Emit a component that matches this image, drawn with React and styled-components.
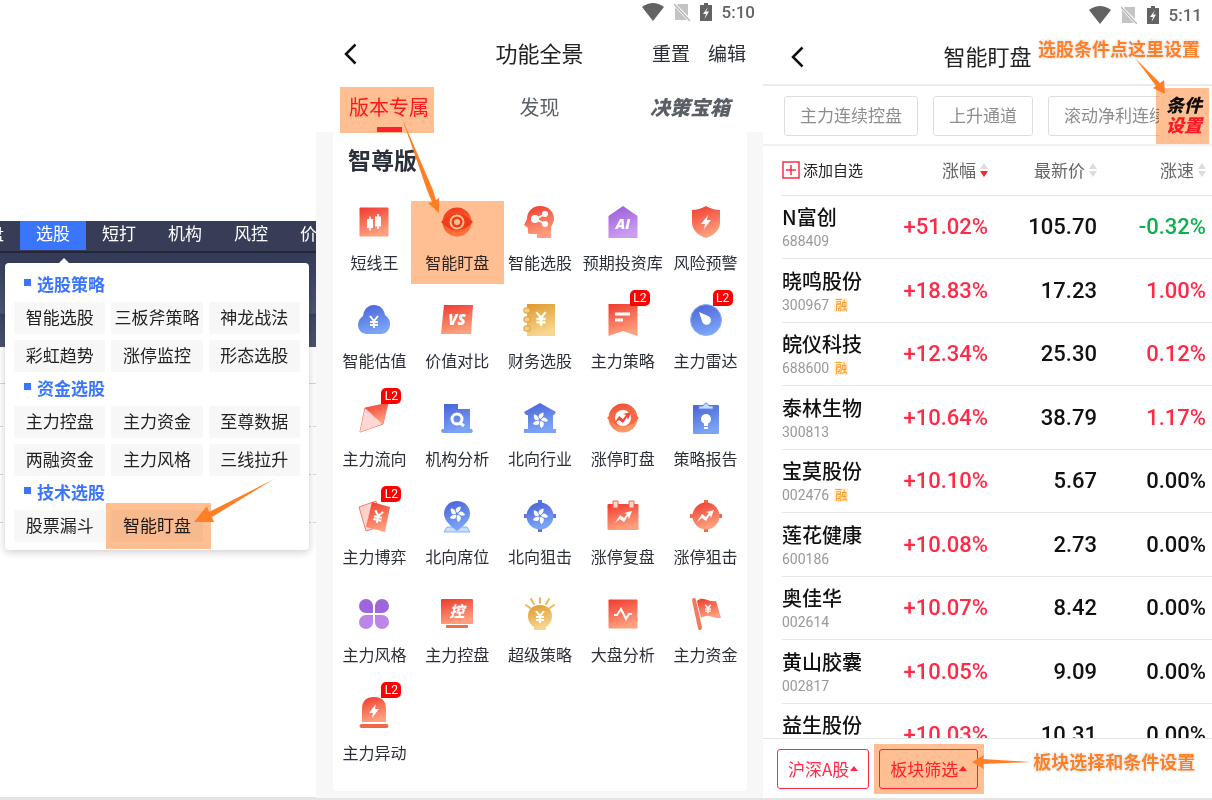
import React, { useState } from 'react'
import styled, { createGlobalStyle, css } from 'styled-components'

const strategyGroups = [
  {
    title: '选股策略',
    items: ['智能选股', '三板斧策略', '神龙战法', '彩虹趋势', '涨停监控', '形态选股'],
  },
  {
    title: '资金选股',
    items: ['主力控盘', '主力资金', '至尊数据', '两融资金', '主力风格', '三线拉升'],
  },
  { title: '技术选股', items: ['股票漏斗', '智能盯盘'] },
]

const features = [
  { name: '短线王', icon: 'candles' },
  { name: '智能盯盘', icon: 'eye', marked: true },
  { name: '智能选股', icon: 'head' },
  { name: '预期投资库', icon: 'ai' },
  { name: '风险预警', icon: 'shield' },
  { name: '智能估值', icon: 'cloud' },
  { name: '价值对比', icon: 'versus' },
  { name: '财务选股', icon: 'notebook' },
  { name: '主力策略', icon: 'ribbon', level2: true },
  { name: '主力雷达', icon: 'radar', level2: true },
  { name: '主力流向', icon: 'kite', level2: true },
  { name: '机构分析', icon: 'building' },
  { name: '北向行业', icon: 'flowerHouse' },
  { name: '涨停盯盘', icon: 'trendEye' },
  { name: '策略报告', icon: 'clipboard' },
  { name: '主力博弈', icon: 'cards', level2: true },
  { name: '北向席位', icon: 'flowerPin' },
  { name: '北向狙击', icon: 'flowerTarget' },
  { name: '涨停复盘', icon: 'calendar' },
  { name: '涨停狙击', icon: 'trendTarget' },
  { name: '主力风格', icon: 'petals' },
  { name: '主力控盘', icon: 'monitor' },
  { name: '超级策略', icon: 'bulb' },
  { name: '大盘分析', icon: 'pulse' },
  { name: '主力资金', icon: 'flag' },
  { name: '主力异动', icon: 'siren', level2: true },
]

const stocks = [
  { name: 'N富创', code: '688409', change: '+51.02%', price: '105.70', speed: '-0.32%' },
  { name: '晓鸣股份', code: '300967', margin: true, change: '+18.83%', price: '17.23', speed: '1.00%' },
  { name: '皖仪科技', code: '688600', margin: true, change: '+12.34%', price: '25.30', speed: '0.12%' },
  { name: '泰林生物', code: '300813', change: '+10.64%', price: '38.79', speed: '1.17%' },
  { name: '宝莫股份', code: '002476', margin: true, change: '+10.10%', price: '5.67', speed: '0.00%' },
  { name: '莲花健康', code: '600186', change: '+10.08%', price: '2.73', speed: '0.00%' },
  { name: '奥佳华', code: '002614', change: '+10.07%', price: '8.42', speed: '0.00%' },
  { name: '黄山胶囊', code: '002817', change: '+10.05%', price: '9.09', speed: '0.00%' },
  { name: '益生股份', code: '002458', change: '+10.03%', price: '10.31', speed: '0.00%' },
]

const speedTone = (speed) => {
  const value = parseFloat(speed)
  if (value > 0) return 'up'
  return value < 0 ? 'down' : 'flat'
}

/* ---------- feature icons ---------- */

function Gradients() {
  const stops = {
    red: ['#ef3a2e', '#ff9f7d'],
    blue: ['#4960d6', '#7aa5f7'],
    purple: ['#965ad6', '#cb9df1'],
    gold: ['#e0982a', '#f7d68f'],
    orange: ['#f0452f', '#ff9a66'],
  }
  return (
    <HiddenSvg aria-hidden="true">
      <defs>
        {Object.entries(stops).map(([id, [from, to]]) => (
          <linearGradient key={id} id={id} x1="0" y1="0" x2="0.3" y2="1">
            <stop offset="0" stopColor={from} />
            <stop offset="1" stopColor={to} />
          </linearGradient>
        ))}
      </defs>
    </HiddenSvg>
  )
}

function IconText({ x, y, size, children }) {
  return (
    <GlyphText x={x} y={y} fontSize={size} textAnchor="middle" fill="#fff">
      {children}
    </GlyphText>
  )
}

const Yen = ({ x = 17, y = 17, s = 1 }) => (
  <path
    d="M-4 -6 L0 -1 L4 -6 M0 -1 V6 M-4 0 H4 M-4 3 H4"
    transform={`translate(${x} ${y}) scale(${s})`}
    fill="none"
    stroke="#fff"
    strokeWidth="2"
  />
)

const Flower = ({ x = 17, y = 17 }) => (
  <g transform={`translate(${x} ${y})`} fill="#fff">
    {[0, 72, 144, 216, 288].map((a) => (
      <path key={a} d="M0 -1 C-3 -3 -3 -6 2 -8 C3 -6 3 -4 0 -1Z" transform={`rotate(${a + 10})`} />
    ))}
  </g>
)

const Trend = ({ x = 17, y = 17, fill = '#fff' }) => (
  <path
    d="M-8 6 L-3 -2 L1 1 L4 -3 L1 -4 L9 -6 L6 2 L5 -1 L1 5 L-3 2Z"
    transform={`translate(${x} ${y})`}
    fill={fill}
  />
)

const Bolt = ({ x = 17, y = 17 }) => (
  <path d="M2 -7 L-5 2 H-1 L-2 7 L5 -2 H1Z" transform={`translate(${x} ${y})`} fill="#fff" />
)

const glyphs = {
  candles: (
    <>
      <rect x="2.5" y="2.5" width="29" height="29" rx="1" fill="url(#red)" />
      <path d="M10 14h6v9h-6zM12.2 11.5h1.6v14h-1.6zM18 11.5h6v10h-6zM20.2 9h1.6v15h-1.6z" fill="#fff" />
    </>
  ),
  eye: (
    <>
      <circle cx="17" cy="17" r="14.5" fill="url(#orange)" />
      <path d="M1 17 Q17 0 33 17 Q17 34 1 17Z" fill="#ee5129" />
      <path d="M3 20 Q17 36 31 20 Q17 32 3 20Z" fill="#ff8a55" />
      <circle cx="17" cy="17" r="6.5" fill="none" stroke="#fff" strokeWidth="2" />
      <circle cx="17" cy="17" r="3" fill="#fff" />
    </>
  ),
  head: (
    <>
      <path d="M17 1 C26 1 31 7 31 14 C31 18 28 20 28 24 V33 H14 V29 H7 C4 29 5 26 5 23 L1 20 L4 14 C4 7 9 1 17 1Z" fill="url(#red)" />
      <path d="M22 9 L13 14 L22 19" fill="none" stroke="#fff" strokeWidth="2" />
      <circle cx="12" cy="14" r="4" fill="#fff" />
      <circle cx="22" cy="9" r="3" fill="#fff" />
      <circle cx="22" cy="19" r="3" fill="#fff" />
    </>
  ),
  ai: (
    <>
      <path d="M17 1 L31.5 11 V33 H2.5 V11Z" fill="url(#purple)" />
      <IconText x="17" y="24" size={14}>AI</IconText>
    </>
  ),
  shield: (
    <>
      <path d="M17 1 Q24 5 31 5 V17 Q31 28 17 33 Q3 28 3 17 V5 Q10 5 17 1Z" fill="url(#red)" />
      <Bolt />
    </>
  ),
  cloud: (
    <>
      <path d="M17 2 C23 2 27 6 28 12 C32 15 33 18 33 21 C33 27 29 31 24 31 H10 C5 31 1 27 1 22 C1 18 3 15 6 13 C7 6 11 2 17 2Z" fill="url(#blue)" />
      <Yen y={19} />
    </>
  ),
  versus: (
    <>
      <path d="M4 2 H33 L31 31 H1Z" fill="url(#red)" />
      <IconText x="17" y="22" size={15}>VS</IconText>
    </>
  ),
  notebook: (
    <>
      <rect x="4" y="1" width="28" height="32" fill="url(#gold)" />
      {[5, 14, 23].map((y) => (
        <rect key={y} x="1" y={y} width="6" height="5" rx="1" fill="#f3cf8a" stroke="#dd9b38" strokeWidth="1" />
      ))}
      <Yen x={18} y={16} s={1.15} />
    </>
  ),
  ribbon: (
    <>
      <path d="M2.5 1 H31.5 V33 L17 28 L2.5 33Z" fill="url(#red)" />
      <path d="M9 11 H24 M9 17 H17" stroke="#fff" strokeWidth="3" />
    </>
  ),
  radar: (
    <>
      <circle cx="17" cy="17" r="15.5" fill="url(#blue)" stroke="#8fb1f6" />
      <path d="M10 9 L19 13 A4.5 4.5 0 1 1 13 18Z" fill="#fff" />
    </>
  ),
  kite: (
    <>
      <path d="M8 7 L31 2 L26 23 L3 31Z" fill="#ffb6a2" stroke="#f37763" strokeWidth="1" />
      <path d="M8 7 L31 2 L26 23Z" fill="url(#red)" />
      <path d="M8 8 L25 23 L3 31Z" fill="#ffd8d5" />
    </>
  ),
  building: (
    <>
      <path d="M4 3 H18 V8 H30 V28 H32 Q34 31 31 32 H3 Q0 31 2 28 H4Z" fill="url(#blue)" />
      <circle cx="17" cy="18" r="5" fill="none" stroke="#fff" strokeWidth="3" />
      <path d="M20 22 L24 25" stroke="#fff" strokeWidth="3" />
    </>
  ),
  flowerHouse: (
    <>
      <path d="M17 2 L33 11 L31 14 H30 V28 H33 V32 H1 V28 H5 V14 H3 L1 11Z" fill="url(#blue)" />
      <Flower y={19} />
    </>
  ),
  trendEye: (
    <>
      <circle cx="17" cy="17" r="14.5" fill="url(#orange)" />
      <path d="M1 17 Q17 0 33 17 Q17 34 1 17Z" fill="#fa6844" />
      <circle cx="17" cy="17" r="8" fill="#fff" />
      <Trend x={16} fill="#ef4b38" />
    </>
  ),
  clipboard: (
    <>
      <rect x="4" y="4" width="26" height="29" rx="1" fill="url(#blue)" />
      <path d="M10 8 V5 H14 Q17 -1 20 5 H24 V8Z" fill="#c7dbff" stroke="#6d90e8" />
      <circle cx="17" cy="18" r="5" fill="#fff" />
      <path d="M15 22 h4 v3 h-4z M15 26 h4 v2 h-4z" fill="#fff" />
    </>
  ),
  cards: (
    <>
      <path d="M2 8 L19 2 L25 27 L9 32Z" fill="#ffd2cc" stroke="#f27d6d" />
      <path d="M15 3 L33 8 L28 33 L9 28Z" fill="url(#red)" />
      <g transform="rotate(12 21 18)"><Yen x={21} y={18} /></g>
    </>
  ),
  flowerPin: (
    <>
      <path d="M7 28 H27 L30 33 H4Z" fill="#c9ddff" stroke="#8baef5" />
      <path d="M17 2 C25 2 30 8 30 15 C30 22 21 29 17 32 C13 29 4 22 4 15 C4 8 9 2 17 2Z" fill="url(#blue)" />
      <Flower y={15} />
    </>
  ),
  flowerTarget: (
    <>
      <path d="M15 1 h4 v32 h-4z M1 15 h32 v4 h-32z" fill="#5776de" />
      <circle cx="17" cy="17" r="13.5" fill="url(#blue)" />
      <Flower />
    </>
  ),
  calendar: (
    <>
      <rect x="1.5" y="5" width="31" height="26" rx="1" fill="url(#red)" />
      <path d="M7 2 h5 v7 h-5z M23 2 h5 v7 h-5z" fill="#ffd5cf" stroke="#f4614d" />
      <Trend y={18} />
    </>
  ),
  trendTarget: (
    <>
      <path d="M15 1 h4 v32 h-4z M1 15 h32 v4 h-32z" fill="#f4694f" />
      <circle cx="17" cy="17" r="13.5" fill="url(#red)" />
      <Trend x={16} />
    </>
  ),
  petals: (
    <>
      <path d="M16 16 H9 A7 7 0 1 1 16 9Z M18 16 V9 A7 7 0 1 1 25 16Z" fill="#9d66db" />
      <path d="M16 18 V25 A7 7 0 1 1 9 18Z M18 18 H25 A7 7 0 1 1 18 25Z" fill="#bd85e8" />
    </>
  ),
  monitor: (
    <>
      <rect x="1" y="2" width="32" height="25" rx="1" fill="url(#red)" />
      <rect x="6" y="28" width="22" height="3" rx="1" fill="#f36a50" />
      <IconText x="17" y="20" size={15}>控</IconText>
    </>
  ),
  bulb: (
    <>
      <path d="M17 1 V6 M8 2 L11 7 M26 2 L23 7 M3 8 L7 11 M31 8 L27 11" stroke="#eab85a" strokeWidth="2" strokeLinecap="round" />
      <path d="M17 8 C25 8 29 13 29 19 C29 25 26 28 23 30 V33 H11 V30 C8 28 5 25 5 19 C5 13 9 8 17 8Z" fill="url(#gold)" />
      <Yen y={20} />
    </>
  ),
  pulse: (
    <>
      <rect x="2.5" y="2.5" width="29" height="29" rx="1" fill="url(#red)" />
      <path d="M8 18 H11 L15 12 L20 22 L23 17 H26" fill="none" stroke="#fff" strokeWidth="2" />
    </>
  ),
  flag: (
    <>
      <path d="M5 3 L11 31" stroke="#f4795d" strokeWidth="4" strokeLinecap="round" />
      <path d="M8 4 C14 -2 20 6 27 4 L32 21 C24 22 20 16 12 21Z" fill="url(#red)" />
      <Yen x={19} y={12} s={0.7} />
    </>
  ),
  siren: (
    <>
      <path d="M5 27 V14 Q5 2 17 2 Q29 2 29 14 V27Z" fill="url(#red)" />
      <rect x="2.5" y="29" width="29" height="4" rx="2" fill="#f26749" />
      <Bolt y={16} />
    </>
  ),
}

function FeatureIcon({ name }) {
  return (
    <svg width="34" height="34" viewBox="0 0 34 34" aria-hidden="true">
      {glyphs[name]}
    </svg>
  )
}

/* ---------- shared pieces ---------- */

function Arrow({ points }) {
  return (
    <ArrowSvg width="1" height="1" aria-hidden="true">
      <polygon points={points} fill="#ff7f27" />
    </ArrowSvg>
  )
}

function Status({ time, low }) {
  return (
    <StatusBar $low={low}>
      <svg width="22" height="18" viewBox="0 0 22 18" aria-hidden="true">
        <path d="M0 4 Q11 -4 22 4 L11 18Z" fill="#636363" />
      </svg>
      <svg width="16" height="18" viewBox="0 0 16 18" aria-hidden="true">
        <path d="M4 1 H14 V13 L3 2Z M1 4 L13 17 H1Z" fill="#c4c4c4" />
        <path d="M0 1 L16 18" stroke="#b5b5b5" strokeWidth="1.5" />
      </svg>
      <svg width="12" height="18" viewBox="0 0 12 18" aria-hidden="true">
        <path d="M4 0 H8 V2 H12 V18 H0 V2 H4Z" fill="#636363" />
        <path d="M8 4 L3 11 H6 L4.5 16 L9 8.5 H6Z" fill="#fff" />
      </svg>
      <span>{time}</span>
    </StatusBar>
  )
}

function Back() {
  return (
    <BackButton type="button" aria-label="返回">
      <svg width="13" height="22" viewBox="0 0 13 22" aria-hidden="true">
        <path d="M11.5 1.5 L2 11 L11.5 20.5" fill="none" stroke="#111" strokeWidth="2.5" />
      </svg>
    </BackButton>
  )
}

function SortMark({ active }) {
  return (
    <svg width="8" height="14" viewBox="0 0 8 14" aria-hidden="true">
      <path d="M0 6 L4 0 L8 6Z" fill="#dcdcdc" />
      <path d="M0 8 L4 14 L8 8Z" fill={active ? '#ff2338' : '#dcdcdc'} />
    </svg>
  )
}

/* ---------- panels ---------- */

function StrategyMenu() {
  return (
    <Desktop>
      <NavBar>
        <NavItem href="#">复盘</NavItem>
        <NavItem href="#" $active>选股</NavItem>
        <NavItem href="#">短打</NavItem>
        <NavItem href="#">机构</NavItem>
        <NavItem href="#">风控</NavItem>
        <NavItem href="#">价值</NavItem>
      </NavBar>
      <Banner />
      <Sheet>
        <i />
        <i />
        <i />
        <i />
      </Sheet>
      <Popup>
        {strategyGroups.map((group) => (
          <section key={group.title}>
            <GroupTitle>{group.title}</GroupTitle>
            <GroupGrid>
              {group.items.map((item) => (
                <GroupButton type="button" key={item}>
                  {item}
                  {item === '智能盯盘' && (
                    <Mark $inset="-7px -8px -7px -5px">
                      <Arrow points="88,19 101,3 103,9 168,-24 106,14 108,19" />
                    </Mark>
                  )}
                </GroupButton>
              ))}
            </GroupGrid>
          </section>
        ))}
      </Popup>
    </Desktop>
  )
}

function Panorama() {
  return (
    <Middle>
      <Status time="5:10" />
      <TitleBar>
        <Back />
        <h1>功能全景</h1>
        <Actions>
          <button type="button">重置</button>
          <button type="button">编辑</button>
        </Actions>
      </TitleBar>
      <Tabs>
        <Tab type="button" $active>
          版本专属
          <Mark $inset="3px 28px -1px 24px" />
        </Tab>
        <Tab type="button">发现</Tab>
        <Tab type="button" $heavy>决策宝箱</Tab>
      </Tabs>
      <Backdrop>
        <FeaturePanel>
          <h2>智尊版</h2>
          <FeatureGrid>
            {features.map((feature) => (
              <Feature type="button" key={feature.name}>
                <IconBox>
                  <FeatureIcon name={feature.icon} />
                  {feature.level2 && <Level2>L2</Level2>}
                </IconBox>
                <span>{feature.name}</span>
                {feature.marked && (
                  <Mark $inset="5px -5px 10px -5px">
                    <Arrow points="-9,-83 22,-11 25,-1 28,-3 28,12 17,2 21,1 16,-11" />
                  </Mark>
                )}
              </Feature>
            ))}
          </FeatureGrid>
        </FeaturePanel>
      </Backdrop>
    </Middle>
  )
}

function Watch() {
  const [sortKey, setSortKey] = useState('change')
  return (
    <Right>
      <Status time="5:11" low />
      <TitleBar $line>
        <Back />
        <h1>智能盯盘</h1>
        <TopNote>选股条件点这里设置</TopNote>
      </TitleBar>
      <ConditionBar>
        <Chips>
          <Chip type="button">主力连续控盘</Chip>
          <Chip type="button">上升通道</Chip>
          <Chip type="button">滚动净利连续增长</Chip>
        </Chips>
        <SettingButton type="button">
          <span>条件</span>
          <em>设置</em>
          <Mark $inset="2px 0 0 -3px">
            <Arrow points="-21,-30 4,-5 8,-8 9,6 -3,0 0,-2" />
          </Mark>
        </SettingButton>
      </ConditionBar>
      <ListArea>
        <Table>
          <colgroup>
            <col />
            <col width="110" />
            <col width="109" />
            <col width="115" />
          </colgroup>
          <thead>
            <tr>
              <th>
                <AddButton type="button">
                  <svg width="18" height="18" viewBox="0 0 18 18" aria-hidden="true">
                    <path d="M1 1 H17 V17 H1Z M4 9 H14 M9 4 V14" fill="none" stroke="#ff2a45" strokeWidth="1.5" />
                  </svg>
                  添加自选
                </AddButton>
              </th>
              {[['change', '涨幅'], ['price', '最新价'], ['speed', '涨速']].map(([key, label]) => (
                <th key={key}>
                  <SortButton type="button" onClick={() => setSortKey(key)}>
                    {label}
                    <SortMark active={sortKey === key} />
                  </SortButton>
                </th>
              ))}
            </tr>
          </thead>
          <tbody>
            {stocks.map((stock) => (
              <tr key={stock.code}>
                <td>
                  <StockName>{stock.name}</StockName>
                  <StockCode>
                    {stock.code}
                    {stock.margin && <b>融</b>}
                  </StockCode>
                </td>
                <Figure $tone="up">{stock.change}</Figure>
                <Figure>{stock.price}</Figure>
                <Figure $tone={speedTone(stock.speed)}>{stock.speed}</Figure>
              </tr>
            ))}
          </tbody>
        </Table>
      </ListArea>
      <BottomBar>
        <FilterButton type="button">
          沪深A股<Caret />
        </FilterButton>
        <FilterButton type="button">
          板块筛选<Caret />
          <Mark $inset="-6px -7px -6px -6px">
            <Arrow points="98,18 110,11 109,15 157,18 109,20 110,25" />
          </Mark>
        </FilterButton>
        <Note>板块选择和条件设置</Note>
      </BottomBar>
    </Right>
  )
}

export default function App() {
  return (
    <>
      <GlobalStyle />
      <Gradients />
      <Page>
        <StrategyMenu />
        <Panorama />
        <Watch />
      </Page>
    </>
  )
}

const GlobalStyle = createGlobalStyle`
  *{
    box-sizing:border-box;
  }
  body{
    margin:0;
    background:#fff;
    color:#2b2f38;
    font-family:"Noto Sans CJK SC","Noto Sans",sans-serif;
  }
  h1,h2{
    margin:0;
  }
  button{
    border:0;
    padding:0;
    background:none;
    color:inherit;
    font:inherit;
    cursor:pointer;
  }
`
const HiddenSvg = styled.svg`
  position:absolute;
  width:0;
  height:0;
`
const GlyphText = styled.text`
  font-family:"Open Sans","Noto Sans CJK SC",sans-serif;
  font-weight:800;
  font-style:italic;
`
const Page = styled.div`
  display:grid;
  grid-template-columns:316fr 447fr 449fr;
  grid-template-rows:minmax(0,1fr);
  height:100vh;
  overflow:hidden;
  background:#fff;
  border-bottom:2px solid #e4e4e4;
`
const Mark = styled.span`
  position:absolute;
  inset:${props => props.$inset};
  pointer-events:none;
  &::before{
    content:'';
    position:absolute;
    inset:0;
    background:#ffbf93;
    mix-blend-mode:multiply;
  }
`
const ArrowSvg = styled.svg`
  position:absolute;
  top:0;
  left:0;
  overflow:visible;
  z-index:2;
`
const noteText = css`
  color:#ff7f27;
  font-size:18px;
  font-weight:700;
  line-height:24px;
  white-space:nowrap;
  text-shadow:0 0 2px #fff,0 0 3px #bbb;
`

/* desktop menu */
const Desktop = styled.div`
  position:relative;
  padding-top:221px;
  min-width:0;
  border-bottom:1px solid #e4e4e4;
`
const NavBar = styled.nav`
  display:flex;
  height:32px;
  overflow:hidden;
  background:#373d57;
  border-bottom:2px solid #22273c;
`
const NavItem = styled.a`
  flex:none;
  width:66px;
  height:29px;
  line-height:24px;
  text-align:center;
  font-size:17px;
  color:#fff;
  text-decoration:none;
  background:${props => props.$active ? '#3a76fb' : 'transparent'};
  &:first-child{
    margin-left:-46px;
  }
`
const Banner = styled.div`
  height:94px;
  background:linear-gradient(#333b58,#4b5577 60px,#343b57 62px,#3d4564 64px,#4b5271);
`
const Sheet = styled.div`
  display:grid;
  grid-template-rows:37px 43px;
  grid-auto-rows:48px;
  i{
    border-bottom:1px dashed #d5d5d5;
  }
  i:first-child{
    border-bottom-style:solid;
  }
`
const Popup = styled.div`
  position:absolute;
  top:263px;
  left:5px;
  right:7px;
  padding:5px 9px 8px;
  background:#fff;
  border-radius:4px;
  box-shadow:0 2px 8px rgba(0,0,0,.2);
  &::before{
    content:'';
    position:absolute;
    left:54px;
    top:-5px;
    border:5px solid transparent;
    border-top:0;
    border-bottom-color:#fff;
  }
`
const GroupTitle = styled.h2`
  display:flex;
  align-items:center;
  gap:6px;
  height:34px;
  padding:0 0 3px 10px;
  font-size:17px;
  font-weight:700;
  color:#3a76fb;
  &::before{
    content:'';
    width:7px;
    height:7px;
    margin-bottom:2px;
    background:#3a76fb;
  }
`
const GroupGrid = styled.div`
  display:grid;
  grid-template-columns:repeat(3,1fr);
  gap:6px;
`
const GroupButton = styled.button`
  position:relative;
  height:32px;
  padding-bottom:3px;
  border-radius:2px;
  background:#f7f7f7;
  color:#222;
  font-size:17px;
  white-space:nowrap;
`

/* phone screens */
const Middle = styled.div`
  display:flex;
  flex-direction:column;
  min-width:0;
`
const Right = styled.div`
  display:flex;
  flex-direction:column;
  min-width:0;
  min-height:0;
`
const StatusBar = styled.div`
  display:flex;
  align-items:center;
  justify-content:flex-end;
  gap:10px;
  height:${props => props.$low ? '30px' : '24px'};
  padding-right:${props => props.$low ? '10px' : '8px'};
  font:500 17px/24px Roboto,sans-serif;
  color:#636363;
`
const TitleBar = styled.header`
  position:relative;
  display:grid;
  grid-template-columns:1fr auto 1fr;
  align-items:center;
  height:${props => props.$line ? '56px' : '60px'};
  padding:0 17px;
  border-bottom:${props => props.$line ? '2px solid #ebebeb' : '0'};
  h1{
    padding-bottom:4px;
    font-size:22px;
    font-weight:400;
    line-height:32px;
    color:#222;
  }
`
const BackButton = styled.button`
  justify-self:start;
  display:flex;
  margin-left:11px;
`
const Actions = styled.div`
  justify-self:end;
  display:flex;
  gap:18px;
  padding-bottom:3px;
  font-size:19px;
`
const Tabs = styled.div`
  display:grid;
  grid-template-columns:146fr 155fr 146fr;
  height:48px;
`
const Tab = styled.button`
  position:relative;
  height:48px;
  padding-bottom:4px;
  font-size:20px;
  color:${props => props.$active ? '#ff1f2d' : '#5a5f66'};
  ${props => props.$heavy && css`
    font-weight:900;
    font-style:italic;
  `}
  ${props => props.$active && css`
    &::before{
      content:'';
      position:absolute;
      left:calc(50% - 12px);
      bottom:0;
      width:25px;
      height:5px;
      background:#ff1f2d;
      z-index:1;
    }
  `}
`
const Backdrop = styled.div`
  flex:1;
  display:flex;
  padding:0 16px 7px 17px;
  background:#f7f7f7;
`
const FeaturePanel = styled.section`
  flex:1;
  min-width:0;
  background:#fff;
  border-radius:0 0 4px 4px;
  h2{
    height:64px;
    padding:11px 15px 0;
    font-size:23px;
    font-weight:700;
    line-height:32px;
    color:#2b303b;
  }
`
const FeatureGrid = styled.div`
  display:grid;
  grid-template-columns:repeat(5,1fr);
  grid-auto-rows:98px;
`
const Feature = styled.button`
  position:relative;
  display:flex;
  flex-direction:column;
  align-items:center;
  gap:11px;
  padding-top:9px;
  font-size:16px;
  line-height:24px;
  white-space:nowrap;
`
const IconBox = styled.span`
  position:relative;
  display:flex;
`
const Level2 = styled.span`
  position:absolute;
  left:24px;
  top:-13px;
  width:20px;
  height:16px;
  border-radius:5px 5px 5px 0;
  background:#f00;
  color:#fff;
  font:12px/16px Roboto,sans-serif;
  text-align:center;
`
const Note = styled.span`
  ${noteText}
  margin-left:45px;
  margin-bottom:16px;
`
const TopNote = styled.span`
  ${noteText}
  position:absolute;
  top:6px;
  right:12px;
`
const ConditionBar = styled.div`
  display:flex;
  height:60px;
  padding-right:3px;
  border-bottom:2px solid #f1f1f1;
`
const Chips = styled.div`
  flex:1;
  min-width:0;
  display:flex;
  gap:15px;
  padding:10px 0 8px 21px;
  overflow:hidden;
`
const Chip = styled.button`
  flex:none;
  height:40px;
  padding:0 15px 4px;
  border:1px solid #dedede;
  border-radius:3px;
  color:#8d8d8d;
  font-size:17px;
`
const SettingButton = styled.button`
  position:relative;
  display:flex;
  flex-direction:column;
  justify-content:center;
  width:50px;
  padding-bottom:2px;
  align-items:center;
  font-size:18px;
  line-height:20px;
  font-weight:900;
  font-style:italic;
  color:#111;
  em{
    color:#ff1f3d;
  }
`
const ListArea = styled.div`
  flex:1;
  min-height:0;
  overflow:hidden;
  padding-left:19px;
`
const Table = styled.table`
  width:100%;
  table-layout:fixed;
  border-collapse:separate;
  border-spacing:0;
  th,td{
    padding:0;
    border-bottom:1px solid #e6e6e6;
  }
  th{
    height:50px;
    padding-bottom:2px;
    font-weight:400;
    text-align:right;
  }
  th:first-child{
    text-align:left;
  }
  th:last-child,td:last-child{
    padding-right:6px;
  }
  td{
    height:63px;
  }
  tr:nth-child(even) td{
    height:64px;
  }
`
const AddButton = styled.button`
  display:flex;
  align-items:center;
  gap:3px;
  font-size:15px;
  white-space:nowrap;
  color:#222;
`
const SortButton = styled.button`
  display:inline-flex;
  align-items:center;
  gap:4px;
  font-size:17px;
  color:#666;
`
const StockName = styled.div`
  font-size:20px;
  font-weight:500;
  line-height:28px;
  color:#111;
`
const StockCode = styled.div`
  display:flex;
  align-items:center;
  gap:5px;
  font:14px/20px Roboto,sans-serif;
  color:#999;
  b{
    background:#fff1de;
    color:#ff9a1e;
    font:500 12px/14px "Noto Sans CJK SC",sans-serif;
    padding:0 1px;
  }
`
const tones = { up: '#ff2a45', down: '#0db14b', flat: '#111' }
const Figure = styled.td`
  text-align:right;
  font:500 22px/28px Roboto,sans-serif;
  color:${props => tones[props.$tone] || tones.flat};
`
const BottomBar = styled.footer`
  display:flex;
  align-items:center;
  gap:10px;
  height:60px;
  padding-left:14px;
  border-top:1px solid #e6e6e6;
`
const FilterButton = styled.button`
  position:relative;
  display:flex;
  align-items:center;
  gap:1px;
  height:40px;
  padding:0 10px;
  border:1px solid #ff2a45;
  border-radius:3px;
  color:#ff2a45;
  font-size:17px;
  white-space:nowrap;
`
const Caret = styled.i`
  border:4px solid transparent;
  border-top:0;
  border-bottom:5px solid #ff2a45;
`
